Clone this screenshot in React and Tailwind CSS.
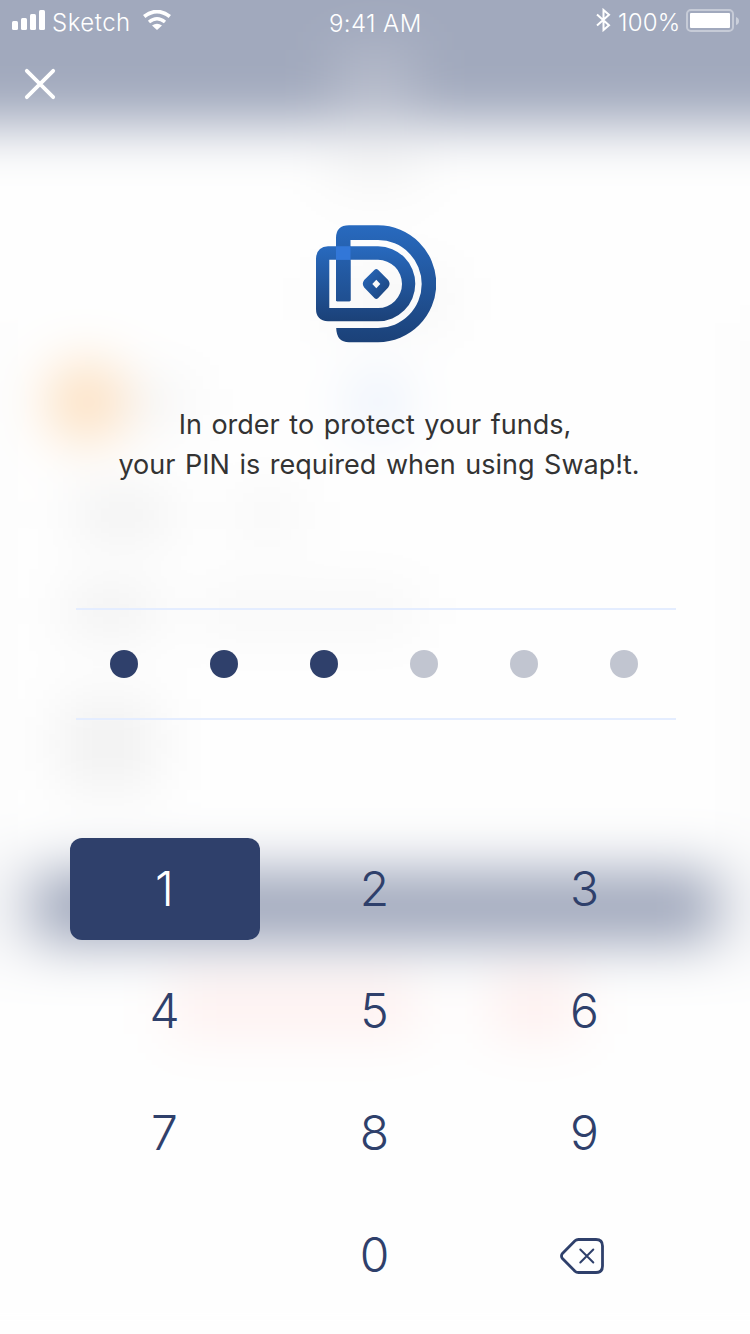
import React from "react";

function Backdrop() {
  return (
    <div className="absolute inset-0 -z-10 overflow-hidden bg-[#fefefe]">
      <div className="-mx-20 -mt-20 flex flex-col bg-[#fefefe] blur-[27px]">
        <div className="flex h-[206px] justify-center bg-[#a1a9bd] pt-[130px]">
          <div className="h-16 w-20 bg-[#b7bccb]" />
        </div>
        <div className="flex h-[197px] flex-col items-center gap-24 pt-7">
          <div className="h-10 w-24 bg-[#eeeeee]" />
          <div className="ml-6 h-12 w-32 shrink-0 bg-[#f6f6f6]" />
        </div>
        <div className="flex h-[520px] justify-between bg-[#fefefe]">
          <div className="w-[80px] bg-[#fcfcfc]" />
          <div className="flex flex-1 flex-col pl-[46px] pt-[46px]">
            <div className="flex h-[66px] items-center">
              <div className="size-[80px] rounded-full bg-[#fddfbe]" />
              <div className="h-10 w-16 bg-[#f3f3f3]" />
              <div className="ml-[158px] size-[60px] rounded-full bg-[#e9f0fc]" />
            </div>
            <div className="mt-[60px] flex gap-[65px] pl-7">
              <div className="h-10 w-24 bg-[#eeeeee]" />
              <div className="h-10 w-16 bg-[#f5f5f5]" />
            </div>
            <div className="mt-14 flex gap-10 pl-5">
              <div className="h-10 w-[90px] bg-[#eeeeee]" />
              <div className="h-10 w-[220px] bg-[#f6f6f6]" />
            </div>
            <div className="ml-[14px] mt-[68px] h-[90px] w-24 bg-[#f1f1f1]" />
          </div>
          <div className="w-[90px] bg-[#fbfbfb]" />
        </div>
        <div className="mt-3 flex h-[104px] items-center bg-[#f4f5f7] px-[114px]">
          <div className="h-[70px] flex-1 rounded-lg bg-[#9da5ba]" />
        </div>
        <div className="flex h-[400px] items-start gap-[70px] pl-[250px] pt-5">
          <div className="h-14 w-[250px] bg-[#fef0ef]" />
          <div className="h-14 w-[90px] bg-[#feeeed]" />
        </div>
      </div>
    </div>
  );
}

function StatusBar() {
  return (
    <header className="flex h-10 items-start pl-3 pr-[10px] pt-[9px] text-white">
      <div className="flex w-[310px] items-start">
        <svg className="mt-px h-5 w-[33px]" viewBox="0 0 33 20" fill="currentColor">
          <rect x="0" y="11" width="6" height="9" rx="1.5" />
          <rect x="9" y="8" width="6" height="12" rx="1.5" />
          <rect x="18" y="4" width="6" height="16" rx="1.5" />
          <rect x="27" y="0" width="6" height="20" rx="1.5" />
        </svg>
        <span className="ml-[7px] mt-px w-[78px] text-[24px] font-light leading-[26px] tracking-[0.5px]">Sketch</span>
        <svg className="ml-[13px] mt-px h-5 w-7" viewBox="0 0 28 20" fill="none">
          <path d="M1.2 6.6 Q14 -3.4 26.8 6.6" stroke="currentColor" strokeWidth="3.8" />
          <path d="M6 12 Q14 5.4 22 12" stroke="currentColor" strokeWidth="3.4" />
          <path d="M9 15.4 Q14 11.9 19 15.4 L14 20 Z" fill="currentColor" />
        </svg>
      </div>
      <div className="flex-1 pt-[2px] text-[24px] font-light leading-[26px] tracking-[0.4px]">
        <span className="ml-[7px]">9:41 AM</span>
      </div>
      <div className="flex items-start">
        <svg className="-mt-px h-6 w-[15px]" viewBox="0 0 15 24" fill="none" stroke="currentColor" strokeWidth="2">
          <path d="M1 6.5 L13 17.2 L7.5 22 V2 L13 6.8 L1 17.5" />
        </svg>
        <span className="ml-[7px] mt-px w-[62px] text-[24px] font-light leading-[26px] tracking-[0.2px]">100%</span>
        <svg className="ml-[6px] h-6 w-[54px]" viewBox="0 0 54 24" fill="none">
          <rect x="1" y="1" width="46" height="21" rx="4" stroke="white" strokeOpacity="0.4" strokeWidth="2" />
          <rect x="4" y="4" width="40" height="15" rx="1" fill="white" />
          <path d="M50 8 Q53 9 53 12 Q53 15 50 16 Z" fill="white" fillOpacity="0.45" />
        </svg>
      </div>
    </header>
  );
}

function Logo() {
  return (
    <svg className="h-[118px] w-[120px]" viewBox="316 225 120 118">
      <defs>
        <linearGradient id="outer" gradientUnits="userSpaceOnUse" x1="376" y1="225" x2="376" y2="342">
          <stop offset="0" stopColor="#286abf" />
          <stop offset="1" stopColor="#1b4178" />
        </linearGradient>
        <linearGradient id="inner" gradientUnits="userSpaceOnUse" x1="366" y1="246" x2="366" y2="321">
          <stop offset="0" stopColor="#286abf" />
          <stop offset="1" stopColor="#1b4178" />
        </linearGradient>
        <linearGradient id="gem" x1="0" y1="0" x2="1" y2="1">
          <stop offset="0" stopColor="#286abf" />
          <stop offset="1" stopColor="#1b4178" />
        </linearGradient>
      </defs>
      <path
        fill="url(#outer)"
        d="M336 238 Q336 225.3 349 225.3 H378 A58.2 58.4 0 0 1 378 342.2 H349 Q336.5 342.2 336.2 328 H378 A43.7 44 0 0 0 378 240 H350.5 V300 Q350.5 301.2 349.3 301.2 H337.2 Q336 301.2 336 300 Z"
      />
      <path
        fill="url(#inner)"
        fillRule="evenodd"
        d="M328 246.3 H378 A37.3 37.5 0 0 1 378 321.3 H328 Q316 320.5 316 309 V258.5 Q316.5 247 328 246.3 Z M329.3 259.8 V308 H378 A24 24.1 0 0 0 378 259.8 Z"
      />
      <rect x="336" y="259.8" width="14.5" height="41.4" rx="1" fill="url(#outer)" />
      <rect x="336" y="246.3" width="14.5" height="13.6" fill="#3277d8" />
      <path
        fill="url(#gem)"
        fillRule="evenodd"
        d="M374.6 269.8 Q376.3 268.2 378 269.8 L388.2 280 Q391 283.8 388.2 287.4 L378 298.3 Q376.3 299.9 374.6 298.3 L364.2 287.4 Q361.4 283.8 364.2 280 Z M376.3 279.8 L372.3 284 L376.3 288.2 L380.3 284 Z"
      />
    </svg>
  );
}

function DeleteIcon() {
  return (
    <svg
      className="-ml-1 mt-[2px] h-[38px] w-[46px]"
      viewBox="0 0 46 38"
      fill="none"
      stroke="currentColor"
      strokeLinecap="round"
      strokeLinejoin="round"
    >
      <path strokeWidth="2.8" d="M18.5 2.5 H36 Q42.5 2.5 42.5 9 V29 Q42.5 35.5 36 35.5 H18.5 Q16.4 35.5 15 34.2 L2.2 21.3 Q0.8 19 2.2 16.7 L15 3.8 Q16.4 2.5 18.5 2.5 Z" />
      <path strokeWidth="2" d="M20.3 12.5 L33.3 25.5 M33.3 12.5 L20.3 25.5" />
    </svg>
  );
}

const keys = ["1", "2", "3", "4", "5", "6", "7", "8", "9", "", "0", "delete"];

export default function App() {
  return (
    <main className="relative isolate flex h-[1334px] w-[750px] flex-col overflow-hidden font-['Inter','Liberation_Sans',sans-serif]">
      <Backdrop />
      <StatusBar />
      <button aria-label="Close" className="ml-6 mt-7 h-8 w-8 text-white">
        <svg viewBox="0 0 32 32" fill="none" stroke="currentColor" strokeWidth="3.8" strokeLinecap="round">
          <path d="M2.8 2.8 L29.2 29.2 M29.2 2.8 L2.8 29.2" />
        </svg>
      </button>
      <div className="mt-[125px] flex justify-center pl-[2px]">
        <Logo />
      </div>
      <div className="mt-[62px] flex h-20 flex-col items-center whitespace-nowrap text-[27px] leading-10 text-[#333333] [word-spacing:2px]">
        <p>In order to protect your funds,</p>
        <p className="ml-2">your PIN is required when using Swap!t.</p>
      </div>
      <div className="ml-[76px] mt-[123px] flex h-28 w-[600px] items-center gap-[72px] border-y-2 border-[#e4edff] pl-[34px]">
        {[0, 1, 2, 3, 4, 5].map((n) => (
          <span key={n} className={n < 3 ? "size-7 rounded-full bg-[#2f406b]" : "size-7 rounded-full bg-[#c1c5d0]"} />
        ))}
      </div>
      <div className="mt-[118px] grid grid-cols-3 gap-5 px-[70px] text-[48px] font-light text-[#2f406b]">
        {keys.map((key) =>
          key === "" ? (
            <span key="blank" />
          ) : (
            <button
              key={key}
              className={
                key === "1"
                  ? "flex h-[102px] w-[190px] items-center justify-center rounded-xl bg-[#2f406b] text-white"
                  : "flex h-[102px] w-[190px] items-center justify-center"
              }
            >
              {key === "delete" ? <DeleteIcon /> : <span className="-ml-px">{key}</span>}
            </button>
          )
        )}
      </div>
    </main>
  );
}
